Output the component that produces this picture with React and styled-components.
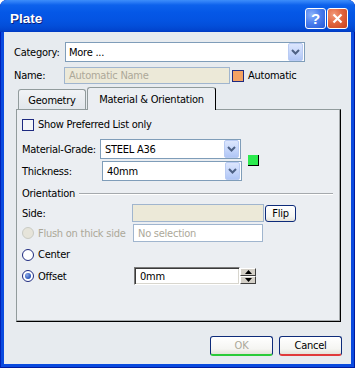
import React from 'react';
import styled, { createGlobalStyle } from 'styled-components';

const GlobalStyle = createGlobalStyle`
  html, body { margin: 0; padding: 0; background: #fff; }
  body {
    font-family: Tahoma, "DejaVu Sans Condensed", "Liberation Sans", sans-serif;
    font-size: 11px;
    letter-spacing: -0.25px;
    color: #000;
  }
`;

const Window = styled.div`
  width: 355px;
  height: 368px;
  box-sizing: border-box;
  display: flex;
  flex-direction: column;
  background: #0A4ADF;
  border-radius: 7px 7px 0 0;
  box-shadow: inset 1px 0 0 #0021B8, inset -1px 0 0 #001A9E, inset 0 -1px 0 #001A9E;
`;

const TitleBar = styled.div`
  height: 32px;
  flex: none;
  box-sizing: border-box;
  display: flex;
  align-items: center;
  padding: 5px 7px 0 10px;
  border-radius: 7px 7px 0 0;
  background: linear-gradient(to bottom, #3D8EFA 0px, #2C7DF6 2px, #0D62EC 5px, #0558E7 12px, #0454E2 20px, #034ED9 26px, #0245CF 30px, #0039C2 32px);
`;

const Title = styled.span`
  flex: 1;
  color: #fff;
  font: bold 13.5px "Liberation Sans", Arial, sans-serif;
  letter-spacing: 0;
  text-shadow: 1px 1px 0 #0A1E7A;
`;

const CapButton = styled.div`
  width: 21px;
  height: 21px;
  box-sizing: border-box;
  margin-left: 1px;
  border: 1px solid #fff;
  border-radius: 3px;
  display: flex;
  align-items: center;
  justify-content: center;
  color: #fff;
  font: bold 15px "Liberation Sans", Arial, sans-serif;
  background: ${p => p.$close
    ? 'radial-gradient(circle at 30% 30%, #F29A7A 0%, #E2663F 45%, #C8401C 100%)'
    : 'radial-gradient(circle at 30% 30%, #8AB0FA 0%, #4C7FEE 45%, #2457D6 100%)'};
`;

const Body = styled.div`
  flex: 1;
  margin: 0 4px 4px;
  box-sizing: border-box;
  background: #E7EBEF;
  padding: 10px 0 0 10px;
  display: flex;
  flex-direction: column;
`;

const Row = styled.div`
  display: flex;
  align-items: center;
  height: ${p => p.$h}px;
  margin-top: ${p => p.$mt || 0}px;
`;

const Label = styled.span`
  width: ${p => p.$w}px;
  flex: none;
  white-space: nowrap;
  color: ${p => (p.$disabled ? '#ACA899' : '#000')};
`;

const Combo = styled.div`
  width: ${p => p.$w}px;
  height: 20px;
  box-sizing: border-box;
  border: 1px solid #7F9DB9;
  background: #fff;
  display: flex;
  align-items: center;
  padding: 0 1px 0 ${p => p.$pl || 3}px;
`;

const ComboText = styled.span`
  flex: 1;
`;

const ComboArrow = styled.span`
  width: 15px;
  height: 18px;
  box-sizing: border-box;
  border-radius: 2px;
  border: 1px solid #B9CBF3;
  background: linear-gradient(to bottom, #DCE6FD, #C3D4FA 60%, #B0C6F6);
  display: flex;
  align-items: center;
  justify-content: center;
`;

const Field = styled.div`
  width: ${p => p.$w}px;
  height: ${p => p.$h || 18}px;
  box-sizing: border-box;
  border: 1px solid #A0B5CE;
  background: ${p => (p.$beige ? '#ECE9D8' : '#fff')};
  color: #ACA899;
  display: flex;
  align-items: center;
  padding-left: 4px;
  flex: none;
`;

const Check = styled.span`
  width: 12px;
  height: 12px;
  flex: none;
  box-sizing: border-box;
  border: 1px solid #1E2A80;
  background: ${p => p.$fill || '#F4F6F8'};
  margin-left: ${p => p.$ml || 0}px;
  margin-right: 4px;
`;

const Radio = styled.span`
  width: 12px;
  height: 12px;
  flex: none;
  box-sizing: border-box;
  border-radius: 50%;
  border: 1px solid ${p => (p.$disabled ? '#C9CBC4' : '#1E2A80')};
  background: ${p => (p.$disabled ? '#E6E4DA' : '#fff')};
  margin-right: 4px;
  display: flex;
  align-items: center;
  justify-content: center;
  &::after {
    content: '';
    display: ${p => (p.$checked ? 'block' : 'none')};
    width: 6px;
    height: 6px;
    border-radius: 50%;
    background: radial-gradient(circle at 35% 35%, #8DAAE8, #2A55B8 70%);
  }
`;

const TabStrip = styled.div`
  display: flex;
  align-items: flex-end;
  height: 22px;
  margin: 3px 0 0 4px;
`;

const Tab = styled.div`
  position: relative;
  z-index: ${p => (p.$active ? 2 : 1)};
  width: ${p => p.$w}px;
  height: ${p => (p.$active ? 23 : 20)}px;
  margin-bottom: ${p => (p.$active ? -1 : 0)}px;
  margin-right: 1px;
  box-sizing: border-box;
  border: 1px solid #919B9C;
  border-bottom: none;
  border-right-color: ${p => (p.$active ? '#000' : '#919B9C')};
  border-radius: 3px 3px 0 0;
  background: ${p => (p.$active ? '#EBEEF2' : 'linear-gradient(to bottom, #F1F3F6, #E2E7EC)')};
  display: flex;
  align-items: center;
  justify-content: center;
  padding-top: ${p => (p.$active ? 0 : 1)}px;
`;

const Panel = styled.div`
  margin-left: 2px;
  width: 325px;
  height: 213px;
  box-sizing: border-box;
  border: 1px solid #919B9C;
  border-right-color: #000;
  border-bottom-color: #000;
  box-shadow: inset -1px -1px 0 #A7ABAE;
  background: #EBEEF2;
  padding: 8px 7px 0 5px;
  display: flex;
  flex-direction: column;
`;

const GradeGroup = styled.div`
  display: flex;
  align-items: center;
  margin-top: 8px;
`;

const GradeRows = styled.div`
  display: flex;
  flex-direction: column;
  gap: 2px;
`;

const ColorSwatch = styled.span`
  width: 10px;
  height: 10px;
  margin-left: 6px;
  background: #2BEA4E;
  border-right: 1px solid #000;
  border-bottom: 1px solid #000;
`;

const GroupHead = styled.div`
  display: flex;
  align-items: center;
  height: 13px;
  margin-top: 6px;
`;

const GroupLine = styled.span`
  flex: 1;
  margin-left: 4px;
  border-top: 1px solid #A5A9AD;
  border-bottom: 1px solid #FFFFFF;
`;

const PushButton = styled.button`
  width: ${p => p.$w}px;
  height: ${p => p.$h}px;
  box-sizing: border-box;
  margin: 0 0 0 ${p => p.$ml || 0}px;
  padding: 0;
  border: 1px solid #0D2B7A;
  border-bottom: ${p => (p.$accent ? `2px solid ${p.$accent}` : '1px solid #0D2B7A')};
  border-radius: 3px;
  background: linear-gradient(to bottom, #FFFFFF, #F5F5F2 70%, #E4E2DA);
  font: 11px Tahoma, "DejaVu Sans Condensed", "Liberation Sans", sans-serif;
  letter-spacing: -0.25px;
  color: ${p => (p.disabled ? '#ACA899' : '#000')};
`;

const SunkenField = styled.div`
  width: 106px;
  height: 18px;
  box-sizing: border-box;
  border: 1px solid;
  border-color: #7A7A7A #FFFFFF #FFFFFF #7A7A7A;
  box-shadow: inset 1px 1px 0 #3A3A3A, inset -1px -1px 0 #D8D6CE;
  background: #fff;
  padding-left: 5px;
  display: flex;
  align-items: center;
`;

const Spinner = styled.div`
  width: 16px;
  height: 16px;
  display: flex;
  flex-direction: column;
`;

const SpinHalf = styled.div`
  flex: 1;
  box-sizing: border-box;
  background: #D4D0C8;
  border: 1px solid;
  border-color: #FFFFFF #404040 #404040 #FFFFFF;
  display: flex;
  align-items: center;
  justify-content: center;
`;

const Footer = styled.div`
  display: flex;
  justify-content: flex-end;
  padding-right: 9px;
  margin-top: 14px;
`;

const Chevron = () => (
  <svg width="9" height="6" viewBox="0 0 9 6">
    <path d="M1 1 L4.5 4.5 L8 1" fill="none" stroke="#4D6185" strokeWidth="2" />
  </svg>
);

const Tri = ({ up }) => (
  <svg width="7" height="4" viewBox="0 0 7 4">
    <path d={up ? 'M0 4 L3.5 0 L7 4 Z' : 'M0 0 L3.5 4 L7 0 Z'} fill="#000" />
  </svg>
);

export default function App() {
  return (
    <>
      <GlobalStyle />
      <Window>
        <TitleBar>
          <Title>Plate</Title>
          <CapButton>?</CapButton>
          <CapButton $close>
            <svg width="11" height="11" viewBox="0 0 11 11">
              <path d="M1.5 1.5 L9.5 9.5 M9.5 1.5 L1.5 9.5" stroke="#fff" strokeWidth="2.2" />
            </svg>
          </CapButton>
        </TitleBar>
        <Body>
          <Row $h={20}>
            <Label $w={51}>Category:</Label>
            <Combo $w={240}>
              <ComboText>More ...</ComboText>
              <ComboArrow><Chevron /></ComboArrow>
            </Combo>
          </Row>
          <Row $h={17} $mt={5}>
            <Label $w={50}>Name:</Label>
            <Field $w={166} $h={17} $beige>Automatic Name</Field>
            <Check $fill="#F4A263" $ml={2} />
            <span>Automatic</span>
          </Row>

          <TabStrip>
            <Tab $w={68}>Geometry</Tab>
            <Tab $w={129} $active>Material &amp; Orientation</Tab>
          </TabStrip>
          <Panel>
            <Row $h={13}>
              <Check />
              <span>Show Preferred List only</span>
            </Row>
            <GradeGroup>
              <GradeRows>
                <Row $h={20}>
                  <Label $w={78}>Material-Grade:</Label>
                  <Combo $w={141} $pl={4}>
                    <ComboText>STEEL A36</ComboText>
                    <ComboArrow><Chevron /></ComboArrow>
                  </Combo>
                </Row>
                <Row $h={20}>
                  <Label $w={80}>Thickness:</Label>
                  <Combo $w={140} $pl={4}>
                    <ComboText>40mm</ComboText>
                    <ComboArrow><Chevron /></ComboArrow>
                  </Combo>
                </Row>
              </GradeRows>
              <ColorSwatch />
            </GradeGroup>

            <GroupHead>
              <span>Orientation</span>
              <GroupLine />
            </GroupHead>
            <Row $h={18} $mt={4}>
              <Label $w={110}>Side:</Label>
              <Field $w={132} $beige />
              <PushButton $w={31} $h={17} $ml={1}>Flip</PushButton>
            </Row>
            <Row $h={18} $mt={2}>
              <Radio $disabled />
              <Label $w={95} $disabled>Flush on thick side</Label>
              <Field $w={130}>No selection</Field>
            </Row>
            <Row $h={13} $mt={6}>
              <Radio />
              <span>Center</span>
            </Row>
            <Row $h={18} $mt={6}>
              <Radio $checked />
              <Label $w={96}>Offset</Label>
              <SunkenField>0mm</SunkenField>
              <Spinner>
                <SpinHalf><Tri up /></SpinHalf>
                <SpinHalf><Tri /></SpinHalf>
              </Spinner>
            </Row>
          </Panel>

          <Footer>
            <PushButton $w={63} $h={20} $accent="#2BCB3A" disabled>OK</PushButton>
            <PushButton $w={63} $h={20} $ml={6} $accent="#E0393B">Cancel</PushButton>
          </Footer>
        </Body>
      </Window>
    </>
  );
}
